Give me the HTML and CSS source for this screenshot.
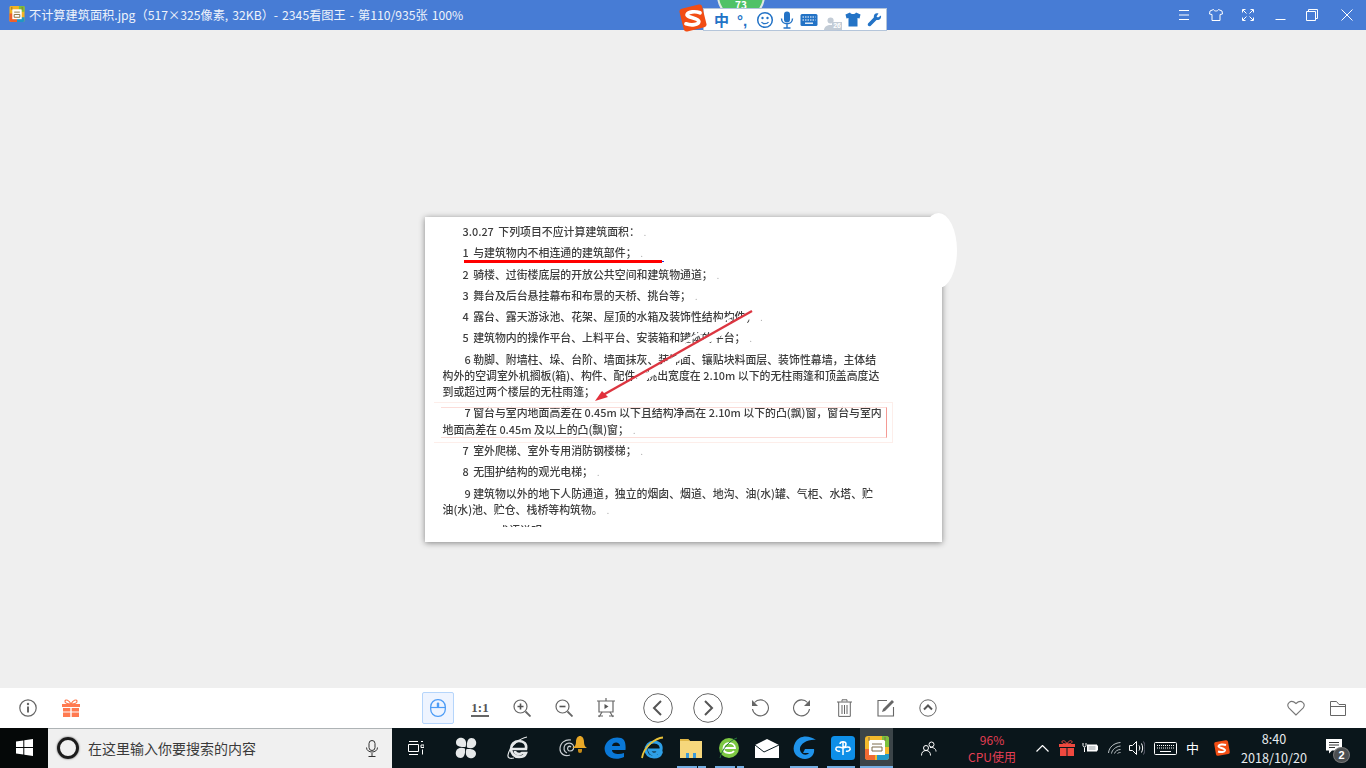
FILE: index.html
```html
<!DOCTYPE html>
<html lang="zh-CN">
<head>
<meta charset="utf-8">
<title>2345看图王</title>
<link rel="stylesheet" href="styles.css">
</head>
<body>
<div class="app">
  <header class="titlebar">
    <svg class="app-logo" viewBox="0 0 16 17" width="16" height="16">
      <rect width="16" height="17" rx="1.5" fill="#f4b321"/>
      <path d="M0 8h8v9H1.5A1.5 1.5 0 0 1 0 15.500z" fill="#ee5f2c"/>
      <path d="M8 12h8v3.500a1.500 1.500 0 0 1-1.500 1.500H8z" fill="#1f96c6"/>
      <path d="M10 0h4.500A1.500 1.500 0 0 1 16 1.500V6h-6z" fill="#7cbf3a"/>
      <path d="M3 3.500h10v10.500H3z" fill="#fff"/>
      <path d="M2.500 1v3M13.500 1v3M5 6.500h6M5 9h6v3H5z" stroke="#8a6f3a" fill="none" stroke-width="1"/>
    </svg>
    <div class="title-text">不计算建筑面积.jpg（517×325像素, 32KB）- 2345看图王 - 第110/935张 100%</div>
    <div class="win-controls">
      <span class="win-slot"><svg viewBox="0 0 12 12" width="12" height="12"><path d="M1 1.500h10M1 6h10M1 10.500h10" stroke="#fff" fill="none"/></svg></span>
      <span class="win-slot"><svg viewBox="0 0 14 12" width="14" height="12"><path d="M4.500.5 1 2 .5 5 3 5.500v6h8v-6L13.500 5 13 2 9.500.5C9 2.500 5 2.500 4.500.5z" stroke="#fff" fill="none"/></svg></span>
      <span class="win-slot"><svg viewBox="0 0 12 12" width="12" height="12"><path d="M.5 3.500v-3h3M8.500.5h3v3M.5 8.500v3h3M8.500 11.500h3v-3M1 1l3.500 3.500M11 1 7.500 4.500M1 11l3.500-3.500M11 11 7.500 7.500" stroke="#fff" fill="none"/></svg></span>
      <span class="win-slot"><svg viewBox="0 0 11 12" width="11" height="12"><path d="M.5 10.500h10" stroke="#fff" fill="none"/></svg></span>
      <span class="win-slot"><svg viewBox="0 0 12 12" width="12" height="12"><path d="M.5 2.500h9v9h-9zM2.500 2.500V.5h9v9h-2" stroke="#fff" fill="none"/></svg></span>
      <span class="win-slot win-close"><svg viewBox="0 0 12 12" width="12" height="12"><path d="M.5.500l11 11M11.500.500l-11 11" stroke="#fff" fill="none"/></svg></span>
    </div>
    <div class="score-badge"><span>73</span></div>
    <div class="ime-bar">
      <svg class="ime-logo" viewBox="0 0 24 24" width="28" height="28"><rect x="2" y="2" width="20" height="20" rx="2.500" fill="#f24d14" transform="rotate(-14 12 12)"/><path d="M18 7.500C14 6 8 6.500 7 9c-1 2.500 10 3 10 6s-6.500 3.500-11 2" stroke="#fff" stroke-width="3.200" fill="none" stroke-linecap="round"/></svg>
      <span class="ime-zh">中</span>
      <span class="ime-punct">°,</span>
      <svg class="ime-icon" viewBox="0 0 18 18" width="18" height="18"><circle cx="9" cy="9" r="7.300" stroke="#2373c6" stroke-width="1.500" fill="none"/><circle cx="6.500" cy="7" r="1.200" fill="#2373c6"/><circle cx="11.500" cy="7" r="1.200" fill="#2373c6"/><path d="M5.500 11c1.500 2.200 5.500 2.200 7 0" stroke="#2373c6" stroke-width="1.300" fill="none"/></svg>
      <svg class="ime-icon" viewBox="0 0 14 18" width="14" height="18"><rect x="4" y="0.500" width="6" height="11" rx="3" fill="#2373c6"/><path d="M1.500 7.500c0 7 11 7 11 0M7 13.500v3M3.500 17h7" stroke="#2373c6" stroke-width="1.400" fill="none"/></svg>
      <svg class="ime-icon" viewBox="0 0 18 14" width="18" height="14"><rect x=".5" y="1" width="17" height="12" rx="1.500" fill="#2373c6"/><path d="M2.500 4h13M2.500 7h13" stroke="#fff" stroke-width="1.200" stroke-dasharray="1.500 1"/><path d="M5 10.200h8" stroke="#fff" stroke-width="1.300"/></svg>
      <span class="ime-user"><svg viewBox="0 0 16 16" width="14" height="14"><circle cx="7.500" cy="4" r="3.500" fill="#c3ccd6"/><path d="M0 15c0-8 15-8 15 0z" fill="#c3ccd6"/></svg><span class="ime-count">26</span></span>
      <svg class="ime-icon" viewBox="0 0 16 15" width="16" height="15"><path d="M5 .5 0.500 2.500 1.500 6.500 3.500 6v8.500h9V6l2 .5 1-4L11 .5C10 2.500 6 2.500 5 .5z" fill="#2373c6"/></svg>
      <svg class="ime-icon" viewBox="0 0 15 15" width="15" height="15"><path d="M14 3.500 11 5.500 9.500 4.500 11.500 1.500C9 .5 6.500 2 6.800 5.500L1 11.500c-1 2 1 3.500 2.500 2.500L9.500 8c3.500.5 5-2 4.500-4.500z" fill="#2373c6"/></svg>
    </div>
  </header>

  <main class="stage">
    <figure class="photo">
      <div class="doc">
        <p class="indent">3.0.27 下列项目不应计算建筑面积：<i>.</i></p>
        <p class="indent">1 与建筑物内不相连通的建筑部件；<i>.</i></p>
        <p class="indent">2 骑楼、过街楼底层的开放公共空间和建筑物通道；<i>.</i></p>
        <p class="indent">3 舞台及后台悬挂幕布和布景的天桥、挑台等；<i>.</i></p>
        <p class="indent">4 露台、露天游泳池、花架、屋顶的水箱及装饰性结构构件；<i>.</i></p>
        <p class="indent">5 建筑物内的操作平台、上料平台、安装箱和罐体的平台；<i>.</i></p>
        <p><span class="first">6 勒脚、附墙柱、垛、台阶、墙面抹灰、装饰面、镶贴块料面层、装饰性幕墙，主体结</span><br>构外的空调室外机搁板(箱)、构件、配件、挑出宽度在 2.10m 以下的无柱雨篷和顶盖高度达<br>到或超过两个楼层的无柱雨篷；<i>.</i></p>
        <p><span class="first">7 窗台与室内地面高差在 0.45m 以下且结构净高在 2.10m 以下的凸(飘)窗，窗台与室内</span><br>地面高差在 0.45m 及以上的凸(飘)窗；<i>.</i></p>
        <p class="indent">7 室外爬梯、室外专用消防钢楼梯；<i>.</i></p>
        <p class="indent">8 无围护结构的观光电梯；<i>.</i></p>
        <p><span class="first">9 建筑物以外的地下人防通道，独立的烟囱、烟道、地沟、油(水)罐、气柜、水塔、贮</span><br>油(水)池、贮仓、栈桥等构筑物。<i>.</i></p>
        <p class="indent">3.0.28 术语说明</p>
      </div>
      <span class="mark-line"></span>
      <span class="mark-band"></span>
      <span class="mark-box"></span>
      <svg class="mark-arrow" viewBox="0 0 170 100" width="170" height="100">
        <path d="M158 9 18 91" stroke="#fff" stroke-width="6" fill="none"/>
        <path d="M140 9 70 48" stroke="#fff" stroke-width="3" fill="none"/>
        <path d="M159 5 10 89" stroke="#dc3540" stroke-width="2.400" fill="none"/>
        <path d="M2 95 9 85 15 91z" fill="#e2303c"/>
      </svg>
      <span class="blob"></span>
    </figure>
  </main>

  <section class="toolbar">
    <div class="tool-left">
      <span class="tool"><svg viewBox="0 0 18 18" width="18" height="18"><circle cx="9" cy="9" r="8.200" stroke="#666" stroke-width="1.200" fill="none"/><path d="M9 7.500v6" stroke="#666" stroke-width="2"/><circle cx="9" cy="5" r="1.200" fill="#666"/></svg></span>
      <span class="tool"><svg viewBox="0 0 20 18" width="20" height="18"><path d="M10 5C8 1 4.500 0 4 2s2.500 3 6 3c3.500 0 6.500-1 6-3s-4-1-6 3z" stroke="#ff7a50" stroke-width="1.200" fill="none"/><path d="M1 5h18v3H1zM2 9h7.300v3.500H2zM10.700 9H18v3.500h-7.300zM2 13.500h7.300V18H2zM10.700 13.500H18V18h-7.300z" fill="#ff7a50"/></svg></span>
    </div>
    <div class="tool-center">
      <span class="mouse-btn"><svg viewBox="0 0 16 18" width="16" height="18"><rect x=".7" y=".7" width="14.600" height="16.600" rx="7" stroke="#4d9cf6" stroke-width="1.300" fill="none"/><path d="M.7 8.500h14.600" stroke="#4d9cf6" stroke-width="1.200"/><rect x="6.800" y="3.500" width="2.400" height="5" rx="1" fill="#4d9cf6"/></svg></span>
      <span class="tool ratio">1:1</span>
      <span class="tool"><svg viewBox="0 0 18 18" width="18" height="18"><circle cx="7.500" cy="7.500" r="6.500" stroke="#666" stroke-width="1.200" fill="none"/><path d="M4.500 7.500h6M7.500 4.500v6" stroke="#555" stroke-width="1.600"/><path d="m12.500 12.500 5 5" stroke="#666" stroke-width="1.800"/></svg></span>
      <span class="tool"><svg viewBox="0 0 18 18" width="18" height="18"><circle cx="7.500" cy="7.500" r="6.500" stroke="#666" stroke-width="1.200" fill="none"/><path d="M4.500 7.500h6" stroke="#555" stroke-width="1.600"/><path d="m12.500 12.500 5 5" stroke="#666" stroke-width="1.800"/></svg></span>
      <span class="tool"><svg viewBox="0 0 18 20" width="18" height="20"><path d="M0 3h18M9 0v3M2 3v11h14V3" stroke="#666" stroke-width="1.200" fill="none"/><path d="M7.500 6v5l4-2.500z" fill="#555"/><path d="M5 14 2 19M13 14l3 5M1 18h5M12 18h5" stroke="#666" stroke-width="1.200" fill="none"/></svg></span>
      <span class="tool tool-nav tool-prev"><svg viewBox="0 0 30 30" width="30" height="30"><circle cx="15" cy="15" r="14.300" stroke="#666" stroke-width="1" fill="none"/><path d="m18 8-7 7 7 7" stroke="#555" stroke-width="2" fill="none"/></svg></span>
      <span class="tool tool-nav"><svg viewBox="0 0 30 30" width="30" height="30"><circle cx="15" cy="15" r="14.300" stroke="#666" stroke-width="1" fill="none"/><path d="m12 8 7 7-7 7" stroke="#555" stroke-width="2" fill="none"/></svg></span>
      <span class="tool tool-first"><svg viewBox="0 0 18 18" width="18" height="18"><path d="M3.500 3.500A8 8 0 1 1 1.500 10" stroke="#666" stroke-width="1.100" fill="none"/><path d="M1 1v6h6z" fill="#666"/></svg></span>
      <span class="tool"><svg viewBox="0 0 18 18" width="18" height="18"><path d="M14.500 3.500A8 8 0 1 0 16.500 10" stroke="#666" stroke-width="1.100" fill="none"/><path d="M17 1v6h-6z" fill="#666"/></svg></span>
      <span class="tool"><svg viewBox="0 0 15 18" width="15" height="18"><path d="M0 3h15M5 2.500V.8h5v1.700M1.700 3v14.400h11.600V3M5 6v9M7.500 6v9M10 6v9" stroke="#666" stroke-width="1" fill="none"/></svg></span>
      <span class="tool"><svg viewBox="0 0 18 18" width="18" height="18"><path d="M10 1.500H1v15.500h15.500V8" stroke="#666" stroke-width="1.100" fill="none"/><path d="M15 1 17 3 8 12 5 13 6 10z" fill="#666"/></svg></span>
      <span class="tool"><svg viewBox="0 0 18 18" width="18" height="18"><circle cx="9" cy="9" r="8.200" stroke="#666" stroke-width="1" fill="none"/><path d="m5 10.500 4-4 4 4" stroke="#555" stroke-width="2" fill="none"/></svg></span>
    </div>
    <div class="tool-right">
      <span class="tool"><svg viewBox="0 0 18 16" width="18" height="16"><path d="M9 15 1.800 7.800C-1 4 3.500-1.500 9 3.500c5.500-5 10 .5 7.200 4.300z" stroke="#777" stroke-width="1.100" fill="none"/></svg></span>
      <span class="tool"><svg viewBox="0 0 16 15" width="16" height="15"><path d="M.5 14.500V.5h6l2.500 3h6.500v11zM.5 5.500h15" stroke="#666" stroke-width="1" fill="none"/></svg></span>
    </div>
  </section>

  <footer class="taskbar">
    <div class="start"><svg viewBox="0 0 17 17" width="17" height="17"><path d="M0 2.500 7.300 1.400V8H0zM8.300 1.300 17 0v8H8.300zM0 9h7.300v6.600L0 14.500zM8.300 9H17v8l-8.700-1.300z" fill="#fff"/></svg></div>
    <div class="search">
      <span class="cortana"></span>
      <span class="search-text">在这里输入你要搜索的内容</span>
      <svg class="search-mic" viewBox="0 0 12 17" width="12" height="17"><rect x="3" y=".5" width="6" height="10" rx="3" stroke="#333" fill="none"/><path d="M.5 7.500c0 6 11 6 11 0M6 13v3M2.500 16.500h7" stroke="#333" fill="none"/></svg>
    </div>
    <div class="task-icons">
      <span class="slot-task"><svg viewBox="0 0 16 14" width="16" height="14"><path d="M.5 3.500h10v7H.5zM1 .5h9M1 13.500h9M13 .5h2M13 4h3v2.500h-3zM14.500 8.500v5" stroke="#fff" fill="none"/></svg></span>
      <span class="slot-wide"><svg viewBox="0 0 22 22" width="22" height="22"><g fill="#e6e9ea"><path id="petal" d="M10.500 10C6 10.500 1 9.500 1 5.500 1 2 4.500 0 7.500 1c3.500 1 4.500 5 3 9z"/><path d="M10.500 10C6 10.500 1 9.500 1 5.500 1 2 4.500 0 7.500 1c3.500 1 4.500 5 3 9z" transform="rotate(90 11 11)"/><path d="M10.500 10C6 10.500 1 9.500 1 5.500 1 2 4.500 0 7.500 1c3.500 1 4.500 5 3 9z" transform="rotate(180 11 11)"/><path d="M10.500 10C6 10.500 1 9.500 1 5.500 1 2 4.500 0 7.500 1c3.500 1 4.500 5 3 9z" transform="rotate(270 11 11)"/></g></svg></span>
      <span class="slot-wide"><svg viewBox="0 0 22 24" width="22" height="24"><path d="M4 13h15c1-5-2-8-7-8-5 0-8 4-8 8s3 8 8 8c3 0 6-1 7-4h-4c-2 2-7 1-7-2" stroke="#e6e9ea" stroke-width="2.600" fill="none"/><path d="M20 1C14 2 3 9 1 19c-.5 3 2 4 6 3" stroke="#e6e9ea" stroke-width="1.200" fill="none"/></svg></span>
      <span class="slot-wide slot-bell"><svg viewBox="0 0 32 24" width="32" height="24"><path d="M12 19c-5 2-10-1-10-6 0-6 5-10 11-9" stroke="#c7ccd0" stroke-width="1.200" fill="none"/><path d="M9 17c-3-1-4-5-2-8 2-2 6-3 8 0 2 3 0 6-3 6-2 0-3-2-2-4 1-1 2-1 3 0" stroke="#c7ccd0" stroke-width="1.200" fill="none"/><path d="M14 12c3-1 4-3 4-6 0-4 2-6 4-6s4 2 4 6c0 3 1 5 3 6z" fill="#e9a827"/><path d="M20 13h4v2a2 2 0 0 1-4 0z" fill="#c58a16"/></svg></span>
      <span class="slot"><svg viewBox="0 0 22 22" width="22" height="22"><path d="M1 9C3 2 11-1 17 1c4 1 5 6 4.500 12H8c0 4 7 5 12 3v4c-6 3-14 2-17-2-2-2-3-6-2-9zM8 9h8c0-4-7-5-8 0z" fill="#0a78d7"/></svg></span>
      <span class="slot"><svg viewBox="0 0 24 24" width="24" height="24"><path d="M7 14h13c1-5-2-8-7-8s-8 4-8 8 3 7 8 7c3 0 6-1 7-4h-4c-2 2-7 1-7-2" stroke="#2e9fe6" stroke-width="3" fill="none"/><path d="M22 1.500C15 2 3 10 1 22" stroke="#e8c23a" stroke-width="1.800" fill="none"/></svg></span>
      <span class="slot"><svg viewBox="0 0 22 20" width="22" height="20"><path d="M0 1h8l2 2h12v17H0z" fill="#f6d77c"/><path d="M0 1h8l2 2H0z" fill="#e1b746"/><path d="M6 15h10v5H6z" fill="#3c9ad8"/><path d="M9 13h4v7H9z" fill="#f6d77c"/></svg></span>
      <span class="slot"><svg viewBox="0 0 22 22" width="22" height="22"><circle cx="11" cy="11" r="10" fill="#7dc842"/><path d="M5 11h12c0-6-11-7-11.500 0C5 17 14 17 16 14" stroke="#fff" stroke-width="1.800" fill="none"/><path d="M19 1C12 3 4 12 2 21" stroke="#23733a" fill="none"/></svg></span>
      <span class="slot"><svg viewBox="0 0 24 19" width="24" height="19"><path d="M0 6 12 0l12 6v13H0z" fill="#fff"/><path d="M0 6l9 7 15-7" stroke="#0a1a20" fill="none"/></svg></span>
      <span class="slot"><svg viewBox="0 0 24 26" width="24" height="26"><path d="M23 5C16 0 6 0 2 8c-4 8 1 16 10 16 6 0 10-5 9-10h-9l-2 4h6c-2 3-8 2-9-3-1-6 8-11 16-10z" fill="#1f93ea"/></svg></span>
      <span class="slot"><svg viewBox="0 0 24 24" width="24" height="24"><rect width="24" height="24" rx="3.500" fill="#0e8fe8"/><path d="M12 5v14M9 8c0-3 6-3 6 0s-3 4-3 4 6-2 7 0-2 4-4 3M12 12s-6-2-7 0 2 4 4 3" stroke="#fff" stroke-width="1.500" fill="none"/></svg></span>
      <span class="slot slot-active"><svg viewBox="0 0 24 24" width="24" height="24"><rect width="24" height="24" rx="3" fill="#f3b92c"/><path d="M0 13h10v11H3a3 3 0 0 1-3-3z" fill="#ef6a33"/><path d="M12 18h12v3a3 3 0 0 1-3 3h-9z" fill="#249ac8"/><path d="M17 0h4a3 3 0 0 1 3 3v8h-7z" fill="#7cc13d"/><path d="M4 4h16v15H4z" fill="#fff"/><path d="M4 1v4M20 1v4M7 8h10M7 11h10v4H7z" stroke="#7d6a4a" fill="none"/></svg></span>
      <span class="run-marks">
        <i class="run run-a"></i><i class="run run-a2"></i><i class="run run-b"></i><i class="run run-b2"></i><i class="run run-c"></i><i class="run run-d"></i><i class="run run-e"></i>
      </span>
    </div>
    <div class="tray">
      <svg class="tray-people" viewBox="0 0 16 15" width="16" height="15"><circle cx="10.500" cy="3.500" r="2.500" stroke="#fff" fill="none"/><circle cx="5" cy="7" r="2.500" stroke="#fff" fill="none"/><path d="M.5 14.500c0-3 1.500-5 4.500-5s4.500 2 4.500 5M9 6.500c3-.5 6 1 6 4" stroke="#fff" fill="none"/></svg>
      <div class="cpu"><span>96%</span><span>CPU使用</span></div>
      <svg class="tray-caret" viewBox="0 0 13 7" width="13" height="7"><path d="m.5 6.500 6-6 6 6" stroke="#fff" stroke-width="1.200" fill="none"/></svg>
      <svg class="tray-gift" viewBox="0 0 16 16" width="16" height="16"><path d="M8 4C6.500.5 3.500 0 3 1.500S5 4 8 4s5.500-1 5-2.500S9.500.5 8 4z" stroke="#f0493f" fill="none"/><path d="M0 4h16v3H0zM1 8h6.500v8H1zM8.500 8H15v8H8.500z" fill="#f0493f"/></svg>
      <svg class="tray-batt" viewBox="0 0 16 12" width="16" height="12"><path d="M5 2.500h10v1h1v5h-1v1H5z" fill="#fff"/><path d="M6.500 4h7v4h-7z" fill="#c9cdcf"/><path d="M1 1v2.500c0 2 3 2 3 0V1M2.500 5.500V10" stroke="#fff" fill="none"/></svg>
      <svg class="tray-wifi" viewBox="0 0 13 12" width="13" height="12"><path d="M.5 11C1 5 6 1 12.500.5M3.500 11.500c.5-3.500 4-7 9-7.500M6.500 11.500c.5-2 3-4 6-4M9.500 11.500c.5-.5 1.500-1 3-1" stroke="#bcc3c6" fill="none"/></svg>
      <svg class="tray-vol" viewBox="0 0 16 14" width="16" height="14"><path d="M.5 4.500h3L7.500.5v13l-4-4h-3z" stroke="#fff" fill="none"/><path d="M10 4.500c1 1.500 1 3.500 0 5M12.500 2.500c1.500 3 1.500 6 0 9" stroke="#fff" fill="none"/><path d="M14.500 .5c2 4 2 9 0 13" stroke="#667" fill="none"/></svg>
      <svg class="tray-kbd" viewBox="0 0 23 13" width="23" height="13"><rect x=".5" y=".5" width="22" height="12" rx="1" stroke="#fff" fill="none"/><path d="M3 3.500h17M3 6h17" stroke="#fff" stroke-dasharray="1 1"/><path d="M6 9.500h11" stroke="#fff"/></svg>
      <span class="tray-zh">中</span>
      <svg class="tray-sogou" viewBox="0 0 16 16" width="16" height="16"><rect x="1" y="1" width="14" height="14" rx="2" fill="#f24d14" transform="rotate(-10 8 8)"/><path d="M12 5C9 4 5 4.500 4.500 6c-.5 2 7 2 6.500 4.500-.5 1.500-4 2-7 1" stroke="#fff" stroke-width="2" fill="none"/></svg>
      <div class="clock"><span>8:40</span><span>2018/10/20</span></div>
      <span class="notify">
        <svg viewBox="0 0 16 15" width="16" height="15"><path d="M0 0h16v11.500H6l-3 3v-3H0z" fill="#fff"/><path d="M3 3.500h10M3 6h10M3 8.500h6" stroke="#333" stroke-width="1"/></svg>
        <b class="notify-count">2</b>
      </span>
    </div>
  </footer>
</div>
</body>
</html>
```
FILE: styles.css
```css
* { box-sizing: border-box; }
html, body { margin: 0; height: 100%; overflow: hidden; }
body { font-family: "Noto Sans CJK SC", "Liberation Sans", sans-serif; }
.app { width: 1366px; height: 768px; display: flex; flex-direction: column; background: #efefef; }

/* title bar */
.titlebar { position: relative; flex: 0 0 30px; display: flex; align-items: center; background: #477cd5; padding-left: 9px; color: #eef3fb; }
.app-logo { flex: none; margin-right: 4px; margin-top: -2px; }
.title-text { font-size: 12.2px; line-height: 30px; margin-top: -1px; white-space: nowrap; word-spacing: 1.300px; }
.win-controls { margin-left: auto; display: flex; align-items: center; height: 30px; }
.win-slot { width: 32px; display: flex; justify-content: center; }
.win-close { width: 38px; }

.score-badge { position: absolute; left: 717px; top: -29px; width: 48px; height: 49px; border-radius: 50%; background: #4fc267; border: 2px solid #dfe9e2; color: #fff; font-size: 10px; font-weight: 700; text-align: center; }
.score-badge span { position: absolute; left: 0; right: 0; top: 25px; line-height: 14px; }

.ime-bar { position: absolute; left: 703px; top: 8px; width: 184px; height: 23px; background: #fff; border: 1px solid #b4c5da; display: flex; align-items: center; z-index: 2; }
.ime-logo { position: absolute; left: -25px; top: -5px; }
.ime-zh { margin-left: 9px; width: 17px; font-size: 15px; font-weight: 700; line-height: 20px; color: #2373c6; text-align: center; }
.ime-punct { margin-left: 4px; width: 16px; padding-top: 3px; font: 700 15px/20px "Liberation Sans", sans-serif; color: #2373c6; text-align: center; }
.ime-icon { flex: none; margin-left: 6px; }
.ime-user { position: relative; width: 18px; height: 16px; margin-left: 6px; }
.ime-count { position: absolute; right: 0; bottom: -2px; padding: 0 1px; background: #c3ccd6; color: #fff; font: 700 7px/8px "Liberation Sans", sans-serif; }
.ime-bar .ime-user + .ime-icon { margin-left: 3px; }
.ime-bar .ime-icon:last-child { margin-left: 6px; }

/* stage */
.stage { flex: 1; display: flex; align-items: flex-start; justify-content: center; padding-top: 187px; background: #efefef; }
.photo { position: relative; margin: 0; width: 517px; height: 325px; background: #fff; box-shadow: 0 1px 6px rgba(0,0,0,.45); }
.doc { height: 310px; overflow: hidden; padding: 6px 60px 0 18px; font-size: 10.9px; line-height: 16.2px; color: #3d3d3d; filter: blur(.45px); font-weight: 500; }
.doc p { margin: 0 0 5.1px; white-space: nowrap; }
.doc i { font-style: normal; color: #aaa; font-size: 8px; line-height: 0; margin-left: 4px; }
.indent { padding-left: 20px; word-spacing: 2px; }
.first { padding-left: 22px; }

.mark-line { position: absolute; left: 39px; top: 43px; width: 198px; height: 3px; background: #f00; }
.mark-line::after { content: ""; position: absolute; left: 198px; top: 1px; width: 2px; height: 1px; background: #2233dd; }
.mark-box { position: absolute; left: 16px; top: 190px; width: 446px; height: 31px; border: 1px solid #fbdcd8; border-left: 0; border-right-color: #f59a94; }
.mark-band { position: absolute; left: 9px; top: 185px; width: 459px; height: 41px; border: 1px solid #fdeeea; border-left: 0; }
.mark-arrow { position: absolute; left: 168px; top: 89px; }
.blob { position: absolute; left: 495px; top: -4px; width: 37px; height: 75px; border-radius: 50%; background: #fff; }

/* toolbar */
.toolbar { flex: 0 0 40px; display: flex; align-items: center; background: #fff; }
.tool-left { width: 422px; display: flex; padding-left: 7px; gap: 1px; }
.tool-center { display: flex; align-items: center; }
.tool-right { margin-left: auto; display: flex; padding-right: 7px; }
.tool { width: 42px; height: 32px; display: flex; align-items: center; justify-content: center; }
.tool-nav { width: 50px; }
.tool-prev { margin-left: 6px; }
.tool-first { margin-left: 6px; }
.mouse-btn { width: 32px; height: 32px; display: flex; align-items: center; justify-content: center; background: #eef4ff; border: 1px solid #b5d5fb; border-radius: 2px; margin-right: 5px; }
.ratio { font: 700 13px/15px "Liberation Serif", serif; color: #555; }
.tool.ratio { height: 18px; width: 18px; margin: 0 12px; border-bottom: 2px solid #666; }
.tool-center .mouse-btn + .ratio { margin-left: 12px; }

/* taskbar */
.taskbar { flex: 0 0 40px; display: flex; align-items: stretch; background: #0a161b; color: #fff; }
.start { width: 48px; display: flex; align-items: center; justify-content: center; background: #050808; padding-bottom: 2px; }
.search { width: 344px; display: flex; align-items: center; background: #f0f0f0; border-top: 1px solid #aeb3b5; padding: 0 14px 1px 9px; }
.cortana { width: 22px; height: 22px; border-radius: 50%; border: 3px solid #1c1c1c; box-shadow: 0 0 2px #555; }
.search-text { margin-left: 9px; font-size: 14px; color: #3a3a3a; }
.search-mic { margin-left: auto; }
.task-icons { position: relative; display: flex; align-items: center; width: 503px; }
.slot-task { width: 48px; display: flex; justify-content: center; }
.slot-wide { width: 52px; display: flex; justify-content: center; }
.slot-bell svg { margin-left: 8px; }
.slot { width: 38px; height: 40px; display: flex; align-items: center; justify-content: center; }
.slot-active { width: 33px; margin-left: -2px; background: #3b4448; }
.run-marks { position: absolute; left: 0; top: 38px; width: 100%; height: 2px; }
.run { position: absolute; top: 0; height: 2px; background: #74aee2; }
.run-a { left: 285px; width: 20px; }
.run-a2 { left: 306px; width: 8px; }
.run-b { left: 323px; width: 20px; }
.run-b2 { left: 345px; width: 7px; }
.run-c { left: 398px; width: 28px; }
.run-d { left: 435px; width: 28px; }
.run-e { left: 468px; width: 33px; }

.tray { flex: 1; display: flex; align-items: center; position: relative; }
.tray-people { margin-left: 26px; flex: none; }
.cpu { width: 70px; margin-left: 20px; margin-top: -1px; display: flex; flex-direction: column; align-items: center; font-size: 12px; line-height: 17px; color: #e53e54; }
.tray-caret { margin-left: 9px; flex: none; }
.tray-gift { margin-left: 10px; flex: none; }
.tray-batt { margin-left: 7px; flex: none; }
.tray-wifi { margin-left: 10px; flex: none; }
.tray-vol { margin-left: 8px; flex: none; }
.tray-kbd { margin-left: 9px; flex: none; }
.tray-zh { margin-left: 9px; width: 14px; font-size: 13px; line-height: 18px; }
.tray-sogou { margin-left: 14px; flex: none; }
.clock { width: 72px; margin-left: 8px; margin-top: -1px; display: flex; flex-direction: column; align-items: center; font-size: 12.6px; line-height: 19px; color: #e8ecee; }
.notify { position: relative; margin-left: 16px; margin-top: -4px; display: flex; }
.notify-count { position: absolute; left: 7px; top: 8px; width: 17px; height: 16px; border-radius: 50%; background: #4b4f51; border: 1px solid #777; color: #fff; font: 700 11px/14px "Liberation Sans", sans-serif; text-align: center; }
```
